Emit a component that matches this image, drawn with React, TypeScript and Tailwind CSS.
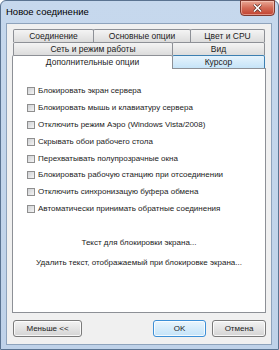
import React from "react";

const checks = [
  "Блокировать экран сервера",
  "Блокировать мышь и клавиатуру сервера",
  "Отключить режим Аэро (Windows Vista/2008)",
  "Скрывать обои рабочего стола",
  "Перехватывать полупрозрачные окна",
  "Блокировать рабочую станцию при отсоединении",
  "Отключить синхронизацую буфера обмена",
  "Автоматически принимать обратные соединения",
];

function Tab({ label, className = "" }: { label: string; className?: string }) {
  return (
    <div
      className={
        "flex items-center justify-center -ml-px first:ml-0 rounded-t-[2px] border border-b-0 border-[#8d9096] bg-linear-to-b from-[#f4f4f4] to-[#dcdcdc] text-[8.5px] leading-none " +
        className
      }
    >
      {label}
    </div>
  );
}

function Button({ label, primary, className = "" }: { label: string; primary?: boolean; className?: string }) {
  return (
    <div
      className={
        "flex items-center justify-center rounded-[3px] border text-[8px] shadow-[inset_0_0_0_1px_rgba(255,255,255,0.8)] " +
        (primary
          ? "border-[#3c8fd6] bg-linear-to-b from-[#e9f5fd] to-[#c4e3f8] "
          : "border-[#7a7a7a] bg-linear-to-b from-[#f3f3f3] to-[#d4d4d4] ") +
        className
      }
    >
      {label}
    </div>
  );
}

export default function App() {
  return (
    <div className="w-[279px] h-[350px] flex flex-col rounded-t-[6px] border border-[#5a7391] bg-linear-to-b from-[#c6d8ed] to-[#bfd2e9] font-['Liberation_Sans',sans-serif] text-[#1b1b1b]">
      {/* title bar */}
      <div className="h-[22px] flex items-start justify-between">
        <span className="pl-[5px] pt-[5px] text-[9.5px] leading-[12px] text-black">Новое соединение</span>
        <div className="mr-[3px] mt-[-1px] w-[35px] h-[16px] flex items-center justify-center rounded-b-[4px] border border-[#7e3a30] bg-linear-to-b from-[#e9a795] via-[#d36a56] to-[#c1412f] shadow-[inset_0_0_0_1px_rgba(255,220,210,0.5)]">
          <svg width="9" height="8" viewBox="0 0 9 8">
            <path d="M1 0.5 L8 7.5 M8 0.5 L1 7.5" stroke="#5a2a22" strokeWidth="3" />
            <path d="M1 0.5 L8 7.5 M8 0.5 L1 7.5" stroke="#ffffff" strokeWidth="1.6" />
          </svg>
        </div>
      </div>

      {/* client */}
      <div className="flex-1 ml-[5px] mr-[6px] mb-[4px] border border-[#8ea3bc] bg-[#f0f0f0] px-[5px] pt-[5px] flex flex-col">
        {/* tabs */}
        <div className="mx-px flex flex-col">
          <div className="flex h-[13px]">
            <Tab label="Соединение" className="w-[81px]" />
            <Tab label="Основные опции" className="w-[98px]" />
            <Tab label="Цвет и CPU" className="flex-1" />
          </div>
          <div className="flex h-[13px]">
            <Tab label="Сеть и режим работы" className="w-[160px]" />
            <Tab label="Вид" className="flex-1" />
          </div>
          <div className="flex h-[13px]">
            <div className="relative z-10 -ml-px w-[161px] h-[14px] flex items-center justify-center rounded-t-[2px] border border-b-0 border-[#8d9096] bg-white text-[8.5px] leading-none">
              Дополнительные опции
            </div>
            <div className="-ml-px flex-1 flex items-center justify-center rounded-t-[2px] border border-b-0 border-[#3c7fb1] bg-linear-to-b from-[#e6f3fc] to-[#c6e4f8] text-[8.5px] leading-none">
              Курсор
            </div>
          </div>
        </div>

        {/* panel */}
        <div className="h-[245px] border border-[#8d9096] bg-white pt-[14px] flex flex-col">
          <div className="pl-[14px] flex flex-col">
            {checks.map((c) => (
              <div key={c} className="h-[16.8px] flex items-center gap-[3px] text-[8px]">
                <span className="w-[8px] h-[8px] border border-[#8f8f8f] bg-linear-to-br from-[#cfd1d4] to-[#f4f4f4] shrink-0" />
                <span className="leading-none">{c}</span>
              </div>
            ))}
          </div>
          <div className="mt-[16px] flex flex-col items-center text-[8px]">
            <div className="h-[20px] flex items-center">Текст для блокировки экрана...</div>
            <div className="h-[20px] flex items-center">Удалить текст, отображаемый при блокировке экрана...</div>
          </div>
        </div>

        {/* buttons */}
        <div className="mt-[7px] flex h-[17px]">
          <Button label="Меньше <<" className="ml-px w-[69px]" />
          <Button label="OK" primary className="ml-auto w-[53px]" />
          <Button label="Отмена" className="ml-[6px] w-[54px]" />
        </div>
      </div>
    </div>
  );
}
